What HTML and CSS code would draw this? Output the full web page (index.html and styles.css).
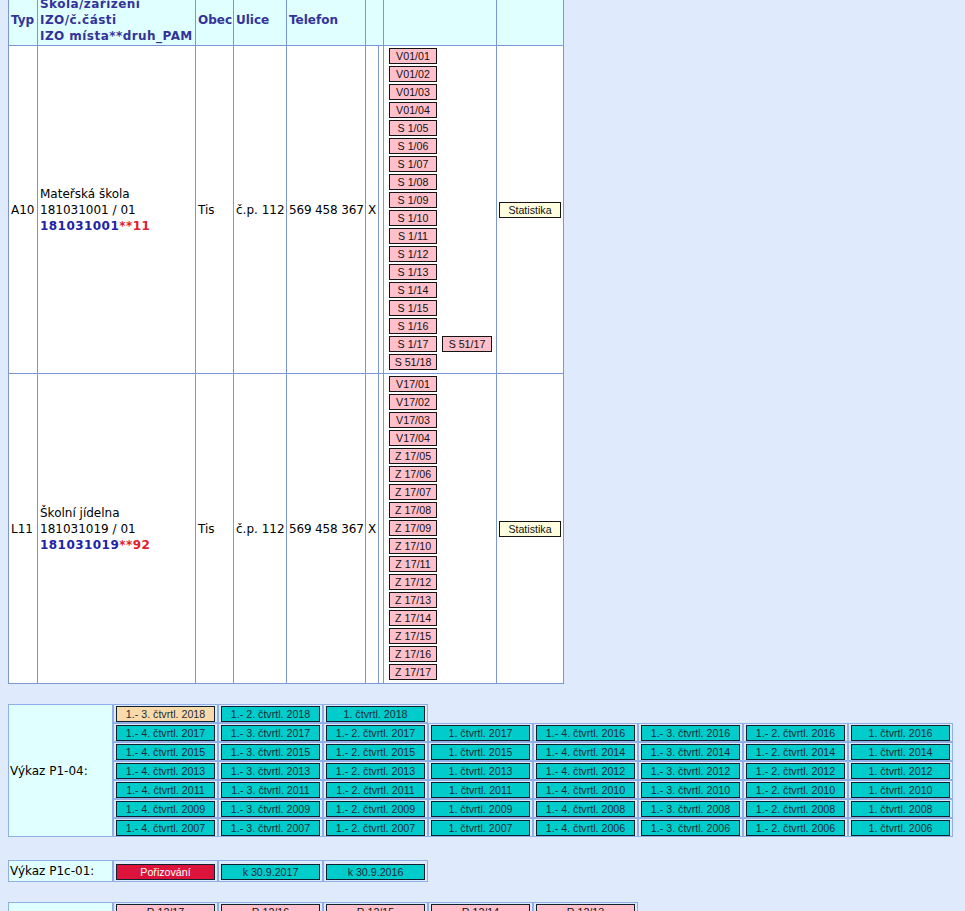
FILE: index.html
```html
<!DOCTYPE html>
<html lang="cs">
<head>
<meta charset="utf-8">
<title>Školy a zařízení</title>
<link rel="stylesheet" href="styles.css">
</head>
<body>
<table class="units">
  <colgroup>
    <col class="c-typ"><col class="c-name"><col class="c-obec"><col class="c-ulice"><col class="c-tel"><col class="c-x"><col class="c-gap"><col class="c-codes"><col class="c-stat">
  </colgroup>
  <thead>
    <tr>
      <th>Typ</th>
      <th class="name-head">Škola/zařízení<br>IZO/č.části<br>IZO místa**druh_PAM</th>
      <th>Obec</th>
      <th>Ulice</th>
      <th>Telefon</th>
      <th colspan="2"></th>
      <th></th>
      <th></th>
    </tr>
  </thead>
  <tbody>
    <tr>
      <td>A10</td>
      <td>Mateřská škola<br>181031001 / 01<br><b class="izo">181031001<span class="pam">**11</span></b></td>
      <td>Tis</td>
      <td>č.p. 112</td>
      <td class="tel">569 458 367</td>
      <td>X</td>
      <td></td>
      <td class="codes">
        <div class="code-list">
          <button type="button" class="btn code">V01/01</button>
          <button type="button" class="btn code">V01/02</button>
          <button type="button" class="btn code">V01/03</button>
          <button type="button" class="btn code">V01/04</button>
          <button type="button" class="btn code">S 1/05</button>
          <button type="button" class="btn code">S 1/06</button>
          <button type="button" class="btn code">S 1/07</button>
          <button type="button" class="btn code">S 1/08</button>
          <button type="button" class="btn code">S 1/09</button>
          <button type="button" class="btn code">S 1/10</button>
          <button type="button" class="btn code">S 1/11</button>
          <button type="button" class="btn code">S 1/12</button>
          <button type="button" class="btn code">S 1/13</button>
          <button type="button" class="btn code">S 1/14</button>
          <button type="button" class="btn code">S 1/15</button>
          <button type="button" class="btn code">S 1/16</button>
          <div class="code-row">
            <button type="button" class="btn code">S 1/17</button>
            <button type="button" class="btn code wide">S 51/17</button>
          </div>
          <button type="button" class="btn code">S 51/18</button>
        </div>
      </td>
      <td class="stat-cell"><button type="button" class="btn stat">Statistika</button></td>
    </tr>
    <tr>
      <td>L11</td>
      <td>Školní jídelna<br>181031019 / 01<br><b class="izo">181031019<span class="pam">**92</span></b></td>
      <td>Tis</td>
      <td>č.p. 112</td>
      <td class="tel">569 458 367</td>
      <td>X</td>
      <td></td>
      <td class="codes">
        <div class="code-list">
          <button type="button" class="btn code">V17/01</button>
          <button type="button" class="btn code">V17/02</button>
          <button type="button" class="btn code">V17/03</button>
          <button type="button" class="btn code">V17/04</button>
          <button type="button" class="btn code">Z 17/05</button>
          <button type="button" class="btn code">Z 17/06</button>
          <button type="button" class="btn code">Z 17/07</button>
          <button type="button" class="btn code">Z 17/08</button>
          <button type="button" class="btn code">Z 17/09</button>
          <button type="button" class="btn code">Z 17/10</button>
          <button type="button" class="btn code">Z 17/11</button>
          <button type="button" class="btn code">Z 17/12</button>
          <button type="button" class="btn code">Z 17/13</button>
          <button type="button" class="btn code">Z 17/14</button>
          <button type="button" class="btn code">Z 17/15</button>
          <button type="button" class="btn code">Z 17/16</button>
          <button type="button" class="btn code">Z 17/17</button>
        </div>
      </td>
      <td class="stat-cell"><button type="button" class="btn stat">Statistika</button></td>
    </tr>
  </tbody>
</table>

<table class="reports first">
  <tr>
    <td class="label" rowspan="7">Výkaz P1-04:</td>
    <td><button type="button" class="btn quarter current">1.- 3. čtvrtl. 2018</button></td>
    <td><button type="button" class="btn quarter">1.- 2. čtvrtl. 2018</button></td>
    <td><button type="button" class="btn quarter">1. čtvrtl. 2018</button></td>
  </tr>
  <tr>
    <td><button type="button" class="btn quarter">1.- 4. čtvrtl. 2017</button></td>
    <td><button type="button" class="btn quarter">1.- 3. čtvrtl. 2017</button></td>
    <td><button type="button" class="btn quarter">1.- 2. čtvrtl. 2017</button></td>
    <td><button type="button" class="btn quarter">1. čtvrtl. 2017</button></td>
    <td><button type="button" class="btn quarter">1.- 4. čtvrtl. 2016</button></td>
    <td><button type="button" class="btn quarter">1.- 3. čtvrtl. 2016</button></td>
    <td><button type="button" class="btn quarter">1.- 2. čtvrtl. 2016</button></td>
    <td><button type="button" class="btn quarter">1. čtvrtl. 2016</button></td>
  </tr>
  <tr>
    <td><button type="button" class="btn quarter">1.- 4. čtvrtl. 2015</button></td>
    <td><button type="button" class="btn quarter">1.- 3. čtvrtl. 2015</button></td>
    <td><button type="button" class="btn quarter">1.- 2. čtvrtl. 2015</button></td>
    <td><button type="button" class="btn quarter">1. čtvrtl. 2015</button></td>
    <td><button type="button" class="btn quarter">1.- 4. čtvrtl. 2014</button></td>
    <td><button type="button" class="btn quarter">1.- 3. čtvrtl. 2014</button></td>
    <td><button type="button" class="btn quarter">1.- 2. čtvrtl. 2014</button></td>
    <td><button type="button" class="btn quarter">1. čtvrtl. 2014</button></td>
  </tr>
  <tr>
    <td><button type="button" class="btn quarter">1.- 4. čtvrtl. 2013</button></td>
    <td><button type="button" class="btn quarter">1.- 3. čtvrtl. 2013</button></td>
    <td><button type="button" class="btn quarter">1.- 2. čtvrtl. 2013</button></td>
    <td><button type="button" class="btn quarter">1. čtvrtl. 2013</button></td>
    <td><button type="button" class="btn quarter">1.- 4. čtvrtl. 2012</button></td>
    <td><button type="button" class="btn quarter">1.- 3. čtvrtl. 2012</button></td>
    <td><button type="button" class="btn quarter">1.- 2. čtvrtl. 2012</button></td>
    <td><button type="button" class="btn quarter">1. čtvrtl. 2012</button></td>
  </tr>
  <tr>
    <td><button type="button" class="btn quarter">1.- 4. čtvrtl. 2011</button></td>
    <td><button type="button" class="btn quarter">1.- 3. čtvrtl. 2011</button></td>
    <td><button type="button" class="btn quarter">1.- 2. čtvrtl. 2011</button></td>
    <td><button type="button" class="btn quarter">1. čtvrtl. 2011</button></td>
    <td><button type="button" class="btn quarter">1.- 4. čtvrtl. 2010</button></td>
    <td><button type="button" class="btn quarter">1.- 3. čtvrtl. 2010</button></td>
    <td><button type="button" class="btn quarter">1.- 2. čtvrtl. 2010</button></td>
    <td><button type="button" class="btn quarter">1. čtvrtl. 2010</button></td>
  </tr>
  <tr>
    <td><button type="button" class="btn quarter">1.- 4. čtvrtl. 2009</button></td>
    <td><button type="button" class="btn quarter">1.- 3. čtvrtl. 2009</button></td>
    <td><button type="button" class="btn quarter">1.- 2. čtvrtl. 2009</button></td>
    <td><button type="button" class="btn quarter">1. čtvrtl. 2009</button></td>
    <td><button type="button" class="btn quarter">1.- 4. čtvrtl. 2008</button></td>
    <td><button type="button" class="btn quarter">1.- 3. čtvrtl. 2008</button></td>
    <td><button type="button" class="btn quarter">1.- 2. čtvrtl. 2008</button></td>
    <td><button type="button" class="btn quarter">1. čtvrtl. 2008</button></td>
  </tr>
  <tr>
    <td><button type="button" class="btn quarter">1.- 4. čtvrtl. 2007</button></td>
    <td><button type="button" class="btn quarter">1.- 3. čtvrtl. 2007</button></td>
    <td><button type="button" class="btn quarter">1.- 2. čtvrtl. 2007</button></td>
    <td><button type="button" class="btn quarter">1. čtvrtl. 2007</button></td>
    <td><button type="button" class="btn quarter">1.- 4. čtvrtl. 2006</button></td>
    <td><button type="button" class="btn quarter">1.- 3. čtvrtl. 2006</button></td>
    <td><button type="button" class="btn quarter">1.- 2. čtvrtl. 2006</button></td>
    <td><button type="button" class="btn quarter">1. čtvrtl. 2006</button></td>
  </tr>
</table>

<table class="reports second">
  <tr>
    <td class="label">Výkaz P1c-01:</td>
    <td><button type="button" class="btn quarter red">Pořizování</button></td>
    <td><button type="button" class="btn quarter">k 30.9.2017</button></td>
    <td><button type="button" class="btn quarter">k 30.9.2016</button></td>
  </tr>
</table>

<table class="reports third">
  <tr>
    <td class="label" rowspan="3">Výkaz R 12-01:</td>
    <td><button type="button" class="btn quarter pinkq">R 12/17</button></td>
    <td><button type="button" class="btn quarter pinkq">R 12/16</button></td>
    <td><button type="button" class="btn quarter pinkq">R 12/15</button></td>
    <td><button type="button" class="btn quarter pinkq">R 12/14</button></td>
    <td><button type="button" class="btn quarter pinkq">R 12/13</button></td>
  </tr>
  <tr>
    <td><button type="button" class="btn quarter pinkq">R 12/12</button></td>
    <td><button type="button" class="btn quarter pinkq">R 12/11</button></td>
    <td><button type="button" class="btn quarter pinkq">R 12/10</button></td>
    <td><button type="button" class="btn quarter pinkq">R 12/09</button></td>
    <td><button type="button" class="btn quarter pinkq">R 12/08</button></td>
  </tr>
  <tr>
    <td><button type="button" class="btn quarter pinkq">R 12/07</button></td>
    <td><button type="button" class="btn quarter pinkq">R 12/06</button></td>
    <td><button type="button" class="btn quarter pinkq">R 12/05</button></td>
    <td><button type="button" class="btn quarter pinkq">R 12/04</button></td>
    <td><button type="button" class="btn quarter pinkq">R 12/03</button></td>
  </tr>
</table>
</body>
</html>
```
FILE: styles.css
```css
html {
  background: #dfebfd;
}
body {
  margin: 0 8px 40px;
  background: #dfebfd;
  font-family: "DejaVu Sans", Verdana, sans-serif;
  font-size: 12px;
  color: #000;
}

/* main table of units */
.units {
  margin-top: -7px;
  border-collapse: collapse;
  table-layout: fixed;
  width: 556px;
  background: #fff;
}
.c-typ { width: 29px; }
.c-name { width: 158px; }
.c-obec { width: 38px; }
.c-ulice { width: 53px; }
.c-tel { width: 79px; }
.c-x { width: 13px; }
.c-gap { width: 5px; }
.c-codes { width: 113px; }
.c-stat { width: 67px; }

.units th,
.units td {
  border: 1px solid #7b97da;
  padding: 0 2px;
  line-height: 16px;
  text-align: left;
  vertical-align: middle;
  white-space: nowrap;
}
.units th {
  background: #e0ffff;
  color: #333399;
  font-weight: bold;
  padding: 2px 2px 1px;
}
.units th.name-head {
  letter-spacing: 0.45px;
}
.units td.tel {
  padding: 0 0 0 2px;
  letter-spacing: -0.15px;
}
.izo {
  color: #2222a8;
  letter-spacing: 0.45px;
}
.pam {
  color: #e0202c;
}
.units td.codes {
  padding: 2px 4px 3px 5px;
}
.code-list {
  display: flex;
  flex-direction: column;
  align-items: flex-start;
  gap: 2px;
}
.code-row {
  display: flex;
  gap: 5px;
}
.units td.stat-cell {
  padding: 0 2px;
}

/* buttons */
.btn {
  display: block;
  box-sizing: border-box;
  height: 16px;
  margin: 0;
  padding: 0;
  border: 1px solid #141414;
  border-radius: 0;
  font-family: "Liberation Sans", Arial, sans-serif;
  font-size: 10.67px;
  line-height: 14px;
  text-align: center;
  color: #111;
  white-space: nowrap;
  -webkit-appearance: none;
  appearance: none;
}
.code {
  width: 48px;
  background: #ffc0cb;
}
.code.wide {
  width: 50px;
}
.stat {
  width: 62px;
  background: #ffffe0;
}
.quarter {
  width: 99px;
  background: #00cccc;
  color: #1a2c3a;
  border-color: #10202c;
}
.quarter.current {
  background: #f9dbab;
}
.quarter.red {
  background: #dc143c;
  color: #fff;
}
.quarter.pinkq {
  background: #ffc0cb;
  color: #111;
}

/* report tables */
.reports {
  margin-top: 21px;
  border-collapse: separate;
  border-spacing: 0;
}
.reports.first {
  margin-top: 20px;
}
.reports.second {
  margin-top: 23px;
}
.reports.third {
  margin-top: 20px;
}
.reports td {
  border: 1px solid #8fb0e6;
  padding: 1px 2px 0;
  vertical-align: middle;
}
.reports td.label {
  width: 100px;
  padding: 2px 2px 2px 1px;
  background: #e0ffff;
  line-height: 16px;
  white-space: nowrap;
}
```
